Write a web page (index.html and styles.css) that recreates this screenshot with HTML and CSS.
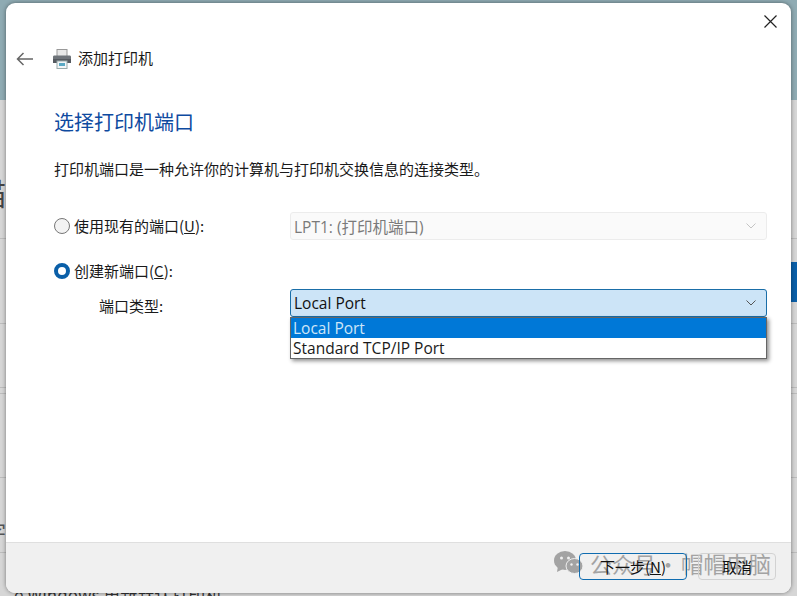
FILE: index.html
```html
<!DOCTYPE html>
<html lang="zh-CN">
<head>
<meta charset="utf-8">
<title>添加打印机</title>
<link rel="stylesheet" href="styles.css">
</head>
<body>
<div class="desk">
  <div class="desk-top"></div>
  <span class="bg-glyph">描</span>
  <span class="bg-glyph bg-glyph-low">字</span>
  <span class="bg-bottom">e Windows 更新默认打印机</span>
  <div class="right-bar"></div>
  <section class="dialog">
    <header class="topbar">
      <svg class="back" width="18" height="14" viewBox="0 0 18 14"><path d="M17 7H1.500M7.500 1L1.500 7l6 6" fill="none" stroke="#666" stroke-width="1.5"/></svg>
      <svg class="printer" width="20" height="20" viewBox="0 0 20 20">
        <rect x="5" y="0.500" width="10" height="7" fill="#e8e8e8" stroke="#999"/>
        <path d="M2 6.500h16a1.500 1.500 0 0 1 1 1.500v6H1V8a1.500 1.500 0 0 1 1-1.500z" fill="#6f747a"/>
        <rect x="1" y="10" width="18" height="4" fill="#555a60"/>
        <rect x="5" y="12" width="10" height="7.500" fill="#f2f6f8" stroke="#9aa"/>
        <rect x="7" y="14" width="6" height="3" fill="#5aa9c4"/>
      </svg>
      <span class="caption">添加打印机</span>
      <svg class="close" width="13" height="13" viewBox="0 0 13 13"><path d="M.5.5l12 12M12.500.5l-12 12" stroke="#222" stroke-width="1.2"/></svg>
    </header>
    <main class="body">
      <h1 class="title">选择打印机端口</h1>
      <p class="intro">打印机端口是一种允许你的计算机与打印机交换信息的连接类型。</p>
      <div class="row row-existing">
        <label class="opt"><span class="radio"></span><span>使用现有的端口(<u>U</u>):</span></label>
        <div class="combo combo-off"><span>LPT1: (打印机端口)</span><svg width="10" height="6" viewBox="0 0 10 6"><path d="M.5.5L5 5 9.500.5" fill="none" stroke="#c4c4c4"/></svg></div>
      </div>
      <div class="row-new"><label class="opt"><span class="radio radio-on"></span><span>创建新端口(<u>C</u>):</span></label></div>
      <div class="row row-type">
        <span class="type-label">端口类型:</span>
        <div class="combo-wrap">
          <div class="combo combo-on"><span>Local Port</span><svg width="10" height="6" viewBox="0 0 10 6"><path d="M.5.5L5 5 9.500.5" fill="none" stroke="#555"/></svg></div>
          <ul class="menu">
            <li class="sel">Local Port</li>
            <li>Standard TCP/IP Port</li>
          </ul>
        </div>
      </div>
    </main>
    <footer class="footer">
      <button class="btn btn-primary">下一步(<u>N</u>)</button>
      <button class="btn btn-cancel">取消</button>
      <div class="watermark">
        <svg width="29" height="24" viewBox="0 0 29 24"><ellipse cx="11" cy="9.500" rx="11" ry="9.500" fill="#a3a3a3"/><path d="M4 15l-1 6 6-3z" fill="#a3a3a3"/><ellipse cx="20.500" cy="15" rx="8.500" ry="7.500" fill="#a3a3a3" stroke="#f0f0f0"/><circle cx="7.500" cy="7" r="1.500" fill="#f0f0f0"/><circle cx="14.500" cy="7" r="1.500" fill="#f0f0f0"/><circle cx="17.500" cy="13.500" r="1.200" fill="#f0f0f0"/><circle cx="23.500" cy="13.500" r="1.200" fill="#f0f0f0"/></svg>
        <span class="wm-a">公众号</span><span class="wm-dot">·</span><span class="wm-b">帽帽电脑</span>
      </div>
    </footer>
  </section>
</div>
</body>
</html>
```
FILE: styles.css
```css
* { box-sizing: border-box; }
html, body { margin: 0; height: 100%; }
body { font-family: "Noto Sans CJK SC", "Noto Sans", sans-serif; color: #1a1a1a; overflow: hidden; }
.desk {
  position: relative; width: 797px; height: 596px; overflow: hidden;
  background-color: #d6d6d6;
  background-image:
    linear-gradient(#bcbcbc, #bcbcbc), linear-gradient(#bcbcbc, #bcbcbc), linear-gradient(#bcbcbc, #bcbcbc),
    linear-gradient(#bcbcbc, #bcbcbc), linear-gradient(#bcbcbc, #bcbcbc), linear-gradient(#bcbcbc, #bcbcbc);
  background-repeat: no-repeat;
  background-size: 100% 1px;
  background-position: 0 238px, 0 323px, 0 387px, 0 393px, 0 477px, 0 552px;
}
.desk-top { height: 100px; background: #8fabb3; }
.right-bar { position: absolute; right: 0; top: 262px; width: 6px; height: 40px; background: #0a5fa8; }
.bg-glyph { position: absolute; left: -24px; top: 170px; font-size: 30px; line-height: 44px; color: #444; }
.bg-glyph-low { top: 510px; font-size: 20px; left: -14px; color: #555; }
.bg-bottom { position: absolute; left: 14px; top: 583px; font-size: 17px; line-height: 24px; color: #333; white-space: nowrap; }
.dialog { position: absolute; left: 6px; top: 3px; width: 785px; height: 590px; background: #fff; border-radius: 9px; display: flex; flex-direction: column; overflow: hidden; box-shadow: 0 0 4px rgba(0,0,0,.45); }
.topbar { position: relative; flex: none; height: 66px; display: flex; align-items: flex-start; padding: 47px 0 0 10px; }
.back { margin-right: 18px; margin-top: 2px; }
.printer { margin-right: 6px; margin-top: -1px; }
.caption { font-size: 15px; line-height: 20px; margin-top: -2px; }
.close { position: absolute; right: 14px; top: 12px; }
.body { flex: 1; padding: 0 24px 0 48px; }
.title { margin: 39px 0 0; font-size: 20px; font-weight: 400; line-height: 28px; color: #0e4a9f; }
.intro { margin: 23px 0 0; font-size: 15px; line-height: 20px; }
.row { display: flex; align-items: center; }
.row-existing { margin-top: 33px; justify-content: space-between; }
.opt { display: flex; align-items: center; gap: 4px; font-size: 15px; line-height: 20px; }
.radio { width: 16px; height: 16px; border-radius: 50%; border: 1px solid #777; background: #f3f3f3; }
.radio-on { border: 4.500px solid #0a5fa8; background: #fff; }
.combo { width: 477px; height: 28px; display: flex; align-items: center; justify-content: space-between; padding: 0 10px 0 3px; border-radius: 3px; font-size: 15.500px; font-family: "Open Sans", "Noto Sans CJK SC", sans-serif; }
.combo-off { background: #fafafa; border: 1px solid #ececec; color: #7a7a7a; }
.row-new { margin-top: 21px; }
.row-type { margin-top: 8px; align-items: flex-start; justify-content: space-between; }
.type-label { margin-left: 45px; margin-top: 7px; font-size: 15px; line-height: 20px; }
.combo-wrap { position: relative; width: 477px; }
.combo-on { background: #cce4f7; border: 1px solid #1a6ea8; color: #111; }
.menu { position: absolute; left: 0; top: 28px; width: 477px; margin: 0; padding: 0; list-style: none; background: #fff; border: 1px solid #666; box-shadow: 2px 2px 4px rgba(0,0,0,.45); font-family: "Open Sans", sans-serif; font-size: 15.500px; }
.menu li { height: 20px; line-height: 20px; padding-left: 2px; white-space: nowrap; }
.menu .sel { background: #0078d7; color: #cfe6f8; }
.footer { position: relative; height: 51px; flex: none; background: #f0f0f0; border-top: 1px solid #dfdfdf; display: flex; justify-content: flex-end; gap: 11px; padding: 10px 15px 0 0; }
.btn { width: 108px; height: 27px; border: 1px solid #d2d2d2; border-radius: 4px; background: transparent; font: 15px/1 "Noto Sans CJK SC", sans-serif; color: #111; padding: 0; position: relative; z-index: 1; }
.btn-cancel { width: 78px; }
.btn-primary { border-color: #0f6cb0; }
.watermark { position: absolute; left: 548px; top: 8px; height: 24px; display: flex; align-items: center; color: #a3a3a3; font-size: 22px; white-space: nowrap; }
.wm-a { margin-left: 7px; font-size: 22px; }
.wm-dot { margin: 0 1px; }
.wm-b { margin-left: 1px; font-size: 22.500px; }
```
